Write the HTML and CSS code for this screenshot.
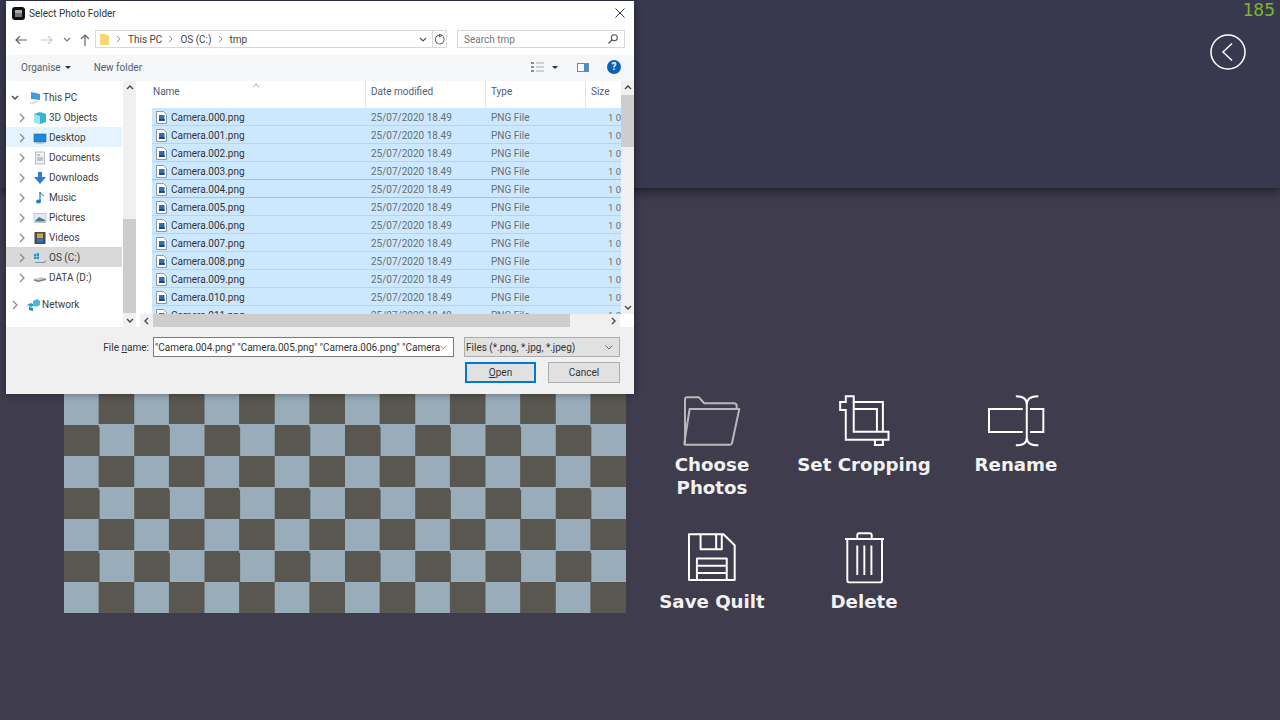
FILE: index.html
```html
<!DOCTYPE html>
<html lang="en">
<head>
  <meta charset="UTF-8" />
  <title>Select Photo Folder</title>
  <link rel="stylesheet" href="styles.css">
</head>
<body>
  <svg class="defs" width="0" height="0">
    <symbol id="file" viewBox="0 0 11 13">
      <path d="M.5.5h7l3 3v9H.5z" fill="#fff" stroke="#8f99a3"/>
      <rect x="3" y="4" width="5.5" height="6" fill="#2f6fae"/>
      <rect x="3" y="8" width="5.5" height="2" fill="#1b4775"/>
    </symbol>
    <symbol id="chev-right" viewBox="0 0 6 10">
      <path d="M1 1l4 4-4 4" fill="none" stroke="#8a8a8a" stroke-width="1.2"/>
    </symbol>
  </svg>

  <header class="topbar">
    <span class="counter">185</span>
    <button class="back-btn" type="button" aria-label="Back">
      <svg viewBox="0 0 36 36" width="36" height="36">
        <circle cx="18" cy="18" r="17" fill="none" stroke="#fff" stroke-width="1.5"/>
        <path d="M22 9.500l-9 8.500 9 8.500" fill="none" stroke="#fff" stroke-width="1.500"/>
      </svg>
    </button>
  </header>

  <main class="editor">
    <div class="checker"></div>

    <div class="actions">
      <div class="action">
        <svg class="action-icon" viewBox="95 40 185 160" width="62" height="53">
          <g fill="none" stroke="#b9b9bb" stroke-width="6" stroke-linejoin="round">
            <path d="M106 190V56q0-6 6-6h36l16 18h90q8 0 8 8v9"/>
            <path d="M120 85h150l-22 103q-1 5-6 5H108q-5 0-4-5z"/>
          </g>
        </svg>
        <span class="action-label">Choose<br>Photos</span>
      </div>
      <div class="action">
        <svg class="action-icon" viewBox="560 40 165 160" width="55" height="53">
          <g fill="none" stroke="#fff" stroke-width="6">
            <path d="M586 47h24v107h105v24H586V88h-17V64h17z"/>
            <path d="M610 64h88v88M610 85h70v67M674 178v16h24v-16"/>
          </g>
        </svg>
        <span class="action-label">Set Cropping</span>
      </div>
      <div class="action">
        <svg class="action-icon" viewBox="1010 40 175 160" width="58" height="53">
          <g fill="none" stroke="#fff" stroke-width="6">
            <path d="M1118 85h-102v70h102M1140 85h40v70h-40"/>
            <path d="M1097 47q33 0 33 24v100q0 24-33 24M1165 47q-35 0-35 24M1165 195q-35 0-35-24"/>
          </g>
        </svg>
        <span class="action-label">Rename</span>
      </div>
      <div class="action">
        <svg class="action-icon" viewBox="110 455 155 160" width="52" height="53">
          <g fill="none" stroke="#fff" stroke-width="6" stroke-linejoin="round">
            <path d="M118 465h104l34 33v105H118z"/>
            <path d="M153 465v45h64v-45M200 465v45"/>
            <path d="M142 603v-65h90v65M142 560h90M142 582h90"/>
          </g>
        </svg>
        <span class="action-label">Save Quilt</span>
      </div>
      <div class="action">
        <svg class="action-icon" viewBox="575 450 135 165" width="45" height="55">
          <g fill="none" stroke="#fff" stroke-width="6" stroke-linejoin="round">
            <path d="M582 475h121M620 475v-12q0-6 6-6h33q6 0 6 6v12"/>
            <path d="M589 475v128q0 7 7 7h94q7 0 7-7V475"/>
            <path d="M620 495v92M642 495v92M664 495v92"/>
          </g>
        </svg>
        <span class="action-label">Delete</span>
      </div>
    </div>
  </main>

  <div class="dialog">
    <div class="titlebar">
      <svg class="app-icon" viewBox="0 0 13 13" width="13" height="13">
        <rect width="13" height="13" rx="3" fill="#111"/>
        <rect x="3" y="3" width="7" height="7" fill="#777"/>
        <rect x="3" y="3" width="7" height="3" fill="#aaa"/>
      </svg>
      <span class="title">Select Photo Folder</span>
      <svg class="close" viewBox="0 0 10 10" width="10" height="10">
        <path d="M.5.5l9 9M9.500.5l-9 9" stroke="#333" stroke-width="1"/>
      </svg>
    </div>

    <div class="addressbar">
      <svg class="nav-btn" viewBox="0 0 12 10" width="12" height="10"><path d="M12 5H1M5 1L1 5l4 4" fill="none" stroke="#666" stroke-width="1.200"/></svg>
      <svg class="nav-btn fwd" viewBox="0 0 12 10" width="12" height="10"><path d="M0 5h11M7 1l4 4-4 4" fill="none" stroke="#ccc" stroke-width="1.200"/></svg>
      <svg class="nav-btn down" viewBox="0 0 8 5" width="8" height="5"><path d="M1 1l3 3 3-3" fill="none" stroke="#777" stroke-width="1.100"/></svg>
      <svg class="nav-btn up" viewBox="0 0 10 12" width="10" height="12"><path d="M5 12V1M1 5l4-4 4 4" fill="none" stroke="#666" stroke-width="1.200"/></svg>
      <div class="pathbox">
        <svg class="crumb-folder" viewBox="0 0 9 11" width="9" height="11"><path d="M0 0h6l3 2v9H0z" fill="#f7d774"/></svg>
        <svg class="crumb-sep" viewBox="0 0 6 10"><use href="#chev-right"/></svg>
        <span>This PC</span>
        <svg class="crumb-sep" viewBox="0 0 6 10"><use href="#chev-right"/></svg>
        <span>OS (C:)</span>
        <svg class="crumb-sep" viewBox="0 0 6 10"><use href="#chev-right"/></svg>
        <span>tmp</span>
        <svg class="path-drop" viewBox="0 0 8 5" width="8" height="5"><path d="M1 1l3 3 3-3" fill="none" stroke="#555" stroke-width="1.100"/></svg>
        <span class="path-refresh">
          <svg viewBox="0 0 12 12" width="11" height="11"><path d="M9.500 2.500A4.800 4.800 0 1 1 6 1.200M6 0v3l3-1.500z" fill="none" stroke="#666" stroke-width="1.100"/></svg>
        </span>
      </div>
      <div class="searchbox">
        <span>Search tmp</span>
        <svg viewBox="0 0 10 10" width="10" height="10"><circle cx="6.300" cy="3.700" r="3" fill="none" stroke="#555" stroke-width="1.100"/><path d="M4 6L.5 9.500" stroke="#555" stroke-width="1.300"/></svg>
      </div>
    </div>

    <div class="toolbar">
      <span class="tool">Organise</span>
      <span class="caret"></span>
      <span class="tool new-folder">New folder</span>
      <svg class="view-icon" viewBox="0 0 13 10" width="13" height="10">
        <path d="M0 0h3v2H0zM0 4h3v2H0zM0 8h3v2H0z" fill="#8e8e8e"/>
        <path d="M5 1h8M5 5h8M5 9h8" stroke="#aaa" stroke-width="1"/>
      </svg>
      <span class="caret view-caret"></span>
      <svg class="pane-icon" viewBox="0 0 12 9" width="12" height="9">
        <rect x=".5" y=".5" width="11" height="8" fill="#fff" stroke="#7a8794"/>
        <rect x="7" y="1" width="4" height="7" fill="#3d8fd6"/>
      </svg>
      <span class="help">?</span>
    </div>

    <div class="browser">
      <nav class="tree">
        <div class="tree-row top"><svg class="chev-down" viewBox="0 0 8 6"><path d="M1 1l3 3 3-3" fill="none" stroke="#444" stroke-width="1.300"/></svg>
          <svg class="tree-icon" viewBox="0 0 14 14"><path d="M4 1l9 2v6l-9-1z" fill="#3f9ddf"/><path d="M1 12l7-2 4 1-6 2z" fill="#d5dbe0"/></svg>This PC</div>
        <div class="tree-row"><svg class="chev" viewBox="0 0 6 10"><use href="#chev-right"/></svg>
          <svg class="tree-icon" viewBox="0 0 14 14"><path d="M1 3l6-2 6 2v8l-6 2-6-2z" fill="#33b5cf"/><path d="M1 3l6 2v8l-6-2z" fill="#9fe3ee"/></svg>3D Objects</div>
        <div class="tree-row hover"><svg class="chev" viewBox="0 0 6 10"><use href="#chev-right"/></svg>
          <svg class="tree-icon" viewBox="0 0 14 14"><rect x="1" y="3" width="12" height="8" fill="#1f88d9" stroke="#1565a8" stroke-width=".6"/><path d="M3 12h8" stroke="#9db4c6"/></svg>Desktop</div>
        <div class="tree-row"><svg class="chev" viewBox="0 0 6 10"><use href="#chev-right"/></svg>
          <svg class="tree-icon" viewBox="0 0 14 14"><rect x="2.500" y="1" width="9" height="12" fill="#eef1f4" stroke="#9aa5ae" stroke-width=".7"/><path d="M4 4h3M4 7h6M4 9h6" stroke="#7d97ad"/></svg>Documents</div>
        <div class="tree-row"><svg class="chev" viewBox="0 0 6 10"><use href="#chev-right"/></svg>
          <svg class="tree-icon" viewBox="0 0 14 14"><path d="M5 1h4v5h4l-6 7-6-7h4z" fill="#2a7fd0"/></svg>Downloads</div>
        <div class="tree-row"><svg class="chev" viewBox="0 0 6 10"><use href="#chev-right"/></svg>
          <svg class="tree-icon" viewBox="0 0 14 14"><path d="M7 1v9" stroke="#1f7fd0" stroke-width="1.300"/><ellipse cx="5.500" cy="10.500" rx="2.500" ry="2" fill="#1f7fd0"/><path d="M7 1q1 3 4 4" fill="none" stroke="#1f7fd0"/></svg>Music</div>
        <div class="tree-row"><svg class="chev" viewBox="0 0 6 10"><use href="#chev-right"/></svg>
          <svg class="tree-icon" viewBox="0 0 14 14"><rect x="1" y="2.500" width="12" height="9" fill="#e4eaef" stroke="#a8b1b8" stroke-width=".6"/><path d="M2 10l4-4 6 3v1.500H2z" fill="#3f7f9f"/></svg>Pictures</div>
        <div class="tree-row"><svg class="chev" viewBox="0 0 6 10"><use href="#chev-right"/></svg>
          <svg class="tree-icon" viewBox="0 0 14 14"><rect x="1.500" y="1" width="11" height="12" fill="#444c55"/><rect x="4" y="2.500" width="6" height="4.500" fill="#d9a53a"/><rect x="4" y="7.500" width="6" height="4" fill="#2f74c0"/></svg>Videos</div>
        <div class="tree-row active"><svg class="chev" viewBox="0 0 6 10"><use href="#chev-right"/></svg>
          <svg class="tree-icon" viewBox="0 0 14 14"><path d="M1 3l2.500-.5v2.500H1zM4 2.300l2-.3v3H4zM1 5.500h2.500V8H1zM4 5.500h2V8H4z" fill="#1a9ad6"/><path d="M2 11h9l2-2v1.500l-2 1.500H2z" fill="#8b9299"/></svg>OS (C:)</div>
        <div class="tree-row"><svg class="chev" viewBox="0 0 6 10"><use href="#chev-right"/></svg>
          <svg class="tree-icon" viewBox="0 0 14 14"><path d="M1 8l8-2 4 1.500v1.500l-8 2-4-1.500z" fill="#c6cacd"/><path d="M1 8l4 1.500 8-2v1.500l-8 2-4-1.500z" fill="#777f86"/></svg>DATA (D:)</div>
        <div class="tree-row top network"><svg class="chev" viewBox="0 0 6 10"><use href="#chev-right"/></svg>
          <svg class="tree-icon" viewBox="0 0 14 14"><path d="M1 7l4-2 4 2-4 2z" fill="#2aa0cf"/><path d="M7 3l4-2 3 2v4l-4 2-3-2z" fill="#49b6dd"/><path d="M3 9l4 1v3l-4-1z" fill="#2387b5"/></svg>Network</div>
      </nav>

      <div class="scrollbar-v tree-scroll">
        <span class="sb-arrow"><svg viewBox="0 0 8 5" width="8" height="5"><path d="M1 4l3-3 3 3" fill="none" stroke="#444" stroke-width="1.300"/></svg></span>
        <div class="sb-track"><div class="sb-thumb"></div></div>
        <span class="sb-arrow"><svg viewBox="0 0 8 5" width="8" height="5"><path d="M1 1l3 3 3-3" fill="none" stroke="#444" stroke-width="1.300"/></svg></span>
      </div>

      <section class="files">
        <div class="files-top">
          <div class="files-main">
            <div class="columns">
              <span class="sort-mark"></span>
              <span class="col col-name">Name</span>
              <span class="col col-date">Date modified</span>
              <span class="col col-type">Type</span>
              <span class="col col-size">Size</span>
            </div>
            <div class="rows">
              <div class="file-row"><svg class="file-icon"><use href="#file"/></svg><span class="fname">Camera.000.png</span><span>25/07/2020 18.49</span><span>PNG File</span><span class="fsize">1 0</span></div>
              <div class="file-row"><svg class="file-icon"><use href="#file"/></svg><span class="fname">Camera.001.png</span><span>25/07/2020 18.49</span><span>PNG File</span><span class="fsize">1 0</span></div>
              <div class="file-row"><svg class="file-icon"><use href="#file"/></svg><span class="fname">Camera.002.png</span><span>25/07/2020 18.49</span><span>PNG File</span><span class="fsize">1 0</span></div>
              <div class="file-row focus-prev"><svg class="file-icon"><use href="#file"/></svg><span class="fname">Camera.003.png</span><span>25/07/2020 18.49</span><span>PNG File</span><span class="fsize">1 0</span></div>
              <div class="file-row focus"><svg class="file-icon"><use href="#file"/></svg><span class="fname">Camera.004.png</span><span>25/07/2020 18.49</span><span>PNG File</span><span class="fsize">1 0</span></div>
              <div class="file-row"><svg class="file-icon"><use href="#file"/></svg><span class="fname">Camera.005.png</span><span>25/07/2020 18.49</span><span>PNG File</span><span class="fsize">1 0</span></div>
              <div class="file-row"><svg class="file-icon"><use href="#file"/></svg><span class="fname">Camera.006.png</span><span>25/07/2020 18.49</span><span>PNG File</span><span class="fsize">1 0</span></div>
              <div class="file-row"><svg class="file-icon"><use href="#file"/></svg><span class="fname">Camera.007.png</span><span>25/07/2020 18.49</span><span>PNG File</span><span class="fsize">1 0</span></div>
              <div class="file-row"><svg class="file-icon"><use href="#file"/></svg><span class="fname">Camera.008.png</span><span>25/07/2020 18.49</span><span>PNG File</span><span class="fsize">1 0</span></div>
              <div class="file-row"><svg class="file-icon"><use href="#file"/></svg><span class="fname">Camera.009.png</span><span>25/07/2020 18.49</span><span>PNG File</span><span class="fsize">1 0</span></div>
              <div class="file-row"><svg class="file-icon"><use href="#file"/></svg><span class="fname">Camera.010.png</span><span>25/07/2020 18.49</span><span>PNG File</span><span class="fsize">1 0</span></div>
              <div class="file-row"><svg class="file-icon"><use href="#file"/></svg><span class="fname">Camera.011.png</span><span>25/07/2020 18.49</span><span>PNG File</span><span class="fsize">1 0</span></div>
            </div>
          </div>
          <div class="scrollbar-v list-scroll">
            <span class="sb-arrow"><svg viewBox="0 0 8 5" width="8" height="5"><path d="M1 4l3-3 3 3" fill="none" stroke="#444" stroke-width="1.300"/></svg></span>
            <div class="sb-track"><div class="sb-thumb"></div></div>
            <span class="sb-arrow"><svg viewBox="0 0 8 5" width="8" height="5"><path d="M1 1l3 3 3-3" fill="none" stroke="#444" stroke-width="1.300"/></svg></span>
          </div>
        </div>
        <div class="scrollbar-h">
          <span class="sb-arrow"><svg viewBox="0 0 5 8" width="5" height="8"><path d="M4 1L1 4l3 3" fill="none" stroke="#444" stroke-width="1.300"/></svg></span>
          <div class="sb-track-h"><div class="sb-thumb-h"></div></div>
          <span class="sb-arrow"><svg viewBox="0 0 5 8" width="5" height="8"><path d="M1 1l3 3-3 3" fill="none" stroke="#444" stroke-width="1.300"/></svg></span>
          <span class="sb-corner"></span>
        </div>
      </section>
    </div>

    <footer class="dialog-foot">
      <div class="foot-row">
        <label class="fname-label">File <u>n</u>ame:</label>
        <div class="fname-input">
          <span class="fname-value">"Camera.004.png" "Camera.005.png" "Camera.006.png" "Camera</span>
          <svg viewBox="0 0 8 5" width="8" height="5"><path d="M.5.5L4 4 7.500.5" fill="none" stroke="#666"/></svg>
        </div>
        <div class="filter">
          <span>Files (*.png, *.jpg, *.jpeg)</span>
          <svg viewBox="0 0 8 5" width="8" height="5"><path d="M.5.5L4 4 7.500.5" fill="none" stroke="#666"/></svg>
        </div>
      </div>
      <div class="foot-row buttons">
        <button class="win-btn primary" type="button"><u>O</u>pen</button>
        <button class="win-btn" type="button">Cancel</button>
      </div>
    </footer>
  </div>
</body>
</html>
```

FILE: styles.css
```css
* {
  box-sizing: border-box;
}
html, body {
  margin: 0;
  height: 100%;
}
body {
  width: 1280px;
  height: 720px;
  overflow: hidden;
  background: #3e3c4d;
  font-family: Roboto, sans-serif;
  position: relative;
}
.defs {
  position: absolute;
}

/* app behind the dialog */
.topbar {
  height: 188px;
  background: #38384e;
  box-shadow: 0 3px 10px rgba(0, 0, 0, 0.55);
  position: relative;
  display: flex;
  flex-direction: column;
  align-items: flex-end;
}
.counter {
  font-family: "DejaVu Sans Mono", monospace;
  font-size: 18px;
  line-height: 20px;
  color: #7fb52a;
  margin-right: 5px;
}
.back-btn {
  background: none;
  border: 0;
  padding: 0;
  margin: 14px 34px 0 0;
  width: 36px;
  height: 36px;
}
.back-btn svg {
  display: block;
}
.editor {
  display: flex;
  padding: 205px 0 0 64px;
  gap: 10px;
}
.checker {
  width: 562px;
  height: 220px;
  background: repeating-conic-gradient(#5a5650 0 25%, #98acb9 0 50%) 0 0 / 70.25px 63px;
  filter: blur(0.7px);
}
.actions {
  display: grid;
  grid-template-columns: repeat(3, 152px);
  grid-auto-rows: 137px;
  margin-top: 1px;
}
.action {
  display: flex;
  flex-direction: column;
  align-items: center;
}
.action-icon {
  display: block;
  height: 53px;
  margin-bottom: 6px;
}
.action-label {
  font-family: "DejaVu Sans", sans-serif;
  font-weight: 700;
  font-size: 18.2px;
  line-height: 23px;
  color: #f2f2f2;
  text-align: center;
  white-space: nowrap;
}

/* file dialog */
.dialog {
  position: absolute;
  left: 6px;
  top: 1px;
  width: 628px;
  height: 393px;
  background: #fff;
  display: flex;
  flex-direction: column;
  font-size: 10px;
  color: #3a3a3a;
  box-shadow: 0 0 8px rgba(0, 0, 0, 0.4);
}
.titlebar {
  height: 27px;
  flex: none;
  display: flex;
  align-items: center;
  padding: 0 9px 3px 6px;
}
.app-icon {
  margin-right: 4px;
}
.title {
  flex: 1;
  color: #333;
}
.addressbar {
  height: 27px;
  flex: none;
  display: flex;
  align-items: flex-start;
  padding-top: 2px;
}
.nav-btn {
  margin-top: 5px;
  margin-left: 9px;
}
.nav-btn.fwd {
  margin-left: 14px;
}
.nav-btn.down {
  margin: 7px 0 0 10px;
}
.nav-btn.up {
  margin: 4px 0 0 9px;
}
.pathbox {
  width: 352px;
  height: 18px;
  margin-left: 5px;
  border: 1px solid #d9d9d9;
  display: flex;
  align-items: center;
  padding-left: 4px;
  color: #444;
}
.crumb-folder {
  margin-right: 7px;
}
.crumb-sep {
  width: 5px;
  height: 8px;
  margin-right: 7px;
}
.crumb-sep + span {
  margin-right: 6px;
}
.path-drop {
  margin-left: auto;
  margin-right: 5px;
}
.path-refresh {
  width: 14px;
  height: 100%;
  border-left: 1px solid #d9d9d9;
  display: flex;
  align-items: center;
  justify-content: center;
}
.searchbox {
  width: 168px;
  height: 18px;
  margin-left: 10px;
  border: 1px solid #d9d9d9;
  display: flex;
  align-items: center;
  justify-content: space-between;
  padding: 0 6px;
  color: #777;
}
.toolbar {
  height: 26px;
  flex: none;
  background: #f5f6f7;
  display: flex;
  align-items: center;
  padding: 0 0 2px 15px;
  color: #51606e;
}
.caret {
  width: 0;
  height: 0;
  margin-left: 4px;
  border-left: 3px solid transparent;
  border-right: 3px solid transparent;
  border-top: 3px solid #333;
}
.new-folder {
  margin-left: 23px;
}
.view-icon {
  margin-left: auto;
}
.view-caret {
  margin-left: 8px;
}
.pane-icon {
  margin-left: 19px;
}
.help {
  width: 14px;
  height: 14px;
  border-radius: 50%;
  margin: 0 13px 0 18px;
  background: #0a62b5;
  color: #fff;
  font-weight: 700;
  font-size: 10px;
  line-height: 14px;
  text-align: center;
}
.browser {
  height: 246px;
  flex: none;
  display: flex;
}
.tree {
  width: 116px;
  flex: none;
  padding-top: 6px;
  margin-right: 1px;
}
.tree-row {
  height: 20px;
  display: flex;
  align-items: center;
  padding: 1px 0 0 13px;
  color: #3d3d3d;
}
.tree-row.top {
  padding-left: 6px;
}
.tree-row.hover {
  background: #e5f3ff;
}
.tree-row.active {
  background: #d9d9d9;
}
.tree-row.network {
  margin-top: 7px;
}
.chev {
  width: 6px;
  height: 10px;
  margin-right: 8px;
  flex: none;
}
.chev-down {
  width: 8px;
  height: 6px;
  margin: 0 8px 0 -1px;
  flex: none;
}
.tree-icon {
  width: 14px;
  height: 14px;
  margin-right: 2px;
  flex: none;
}
.scrollbar-v {
  width: 13px;
  flex: none;
  background: #f0f0f0;
  display: flex;
  flex-direction: column;
}
.sb-arrow {
  height: 13px;
  flex: none;
  display: flex;
  align-items: center;
  justify-content: center;
}
.sb-track {
  flex: 1;
  position: relative;
}
.sb-thumb {
  background: #cdcdcd;
  position: absolute;
  left: 0;
  right: 0;
}
.tree-scroll .sb-thumb {
  top: 125px;
  height: 94px;
}
.list-scroll .sb-thumb {
  top: 1px;
  height: 52px;
}
.files {
  flex: 1;
  display: flex;
  flex-direction: column;
  min-width: 0;
}
.files-top {
  height: 233px;
  display: flex;
}
.files-main {
  flex: 1;
  min-width: 0;
  overflow: hidden;
}
.columns {
  height: 27px;
  position: relative;
  color: #51606e;
  display: grid;
  grid-template-columns: 230px 120px 100px 35px;
  align-items: center;
}
.col {
  height: 100%;
  display: flex;
  align-items: center;
  border-right: 1px solid #e5e5e5;
  padding: 0 0 6px 5px;
}
.col-name {
  padding-left: 17px;
}
.col-size {
  border: 0;
}
.sort-mark {
  position: absolute;
  left: 117px;
  top: 1px;
  width: 6px;
  height: 6px;
  border-left: 1px solid #aaa;
  border-top: 1px solid #aaa;
  transform: rotate(45deg) scale(0.8);
  margin-top: 2px;
}
.rows {
  height: 206px;
  overflow: hidden;
  margin-left: 16px;
}
.file-row {
  height: 18px;
  padding-top: 1px;
  background: #cce8ff;
  border-bottom: 1px solid #a9d8fb;
  display: grid;
  grid-template-columns: 219px 120px 117px auto;
  align-items: center;
  color: #6d6d6d;
  white-space: nowrap;
}
.file-row.focus-prev,
.file-row.focus {
  border-bottom-color: #8ec8f4;
}
.file-icon {
  position: absolute;
  width: 11px;
  height: 13px;
  margin-left: 4px;
}
.fname {
  padding-left: 19px;
  color: #333;
}
.fsize {
  font-size: 9.5px;
}
.scrollbar-h {
  height: 13px;
  margin-left: 4px;
  display: flex;
  background: #f0f0f0;
}
.scrollbar-h .sb-arrow {
  width: 13px;
}
.sb-track-h {
  flex: 1;
  position: relative;
}
.sb-thumb-h {
  position: absolute;
  left: 0;
  top: 0;
  bottom: 0;
  width: 417px;
  background: #cdcdcd;
}
.sb-corner {
  width: 14px;
  background: #fff;
}
.dialog-foot {
  flex: 1;
  background: #f0f0f0;
  padding-top: 10px;
}
.foot-row {
  display: flex;
  align-items: center;
}
.fname-label {
  width: 143px;
  text-align: right;
  color: #333;
}
.fname-input {
  width: 301px;
  height: 20px;
  margin-left: 4px;
  background: #fff;
  border: 1px solid #7a7a7a;
  display: flex;
  align-items: center;
  padding: 0 6px 0 1px;
  color: #333;
}
.fname-value {
  flex: 1;
  white-space: nowrap;
}
.filter {
  width: 156px;
  height: 20px;
  margin-left: 10px;
  background: #e1e1e1;
  border: 1px solid #adadad;
  display: flex;
  align-items: center;
  justify-content: space-between;
  padding: 0 6px 0 1px;
  color: #333;
}
.buttons {
  margin-top: 5px;
  padding-left: 459px;
}
.win-btn {
  width: 72px;
  height: 21px;
  padding: 0;
  background: #e1e1e1;
  border: 1px solid #adadad;
  font: inherit;
  color: #333;
}
.win-btn.primary {
  width: 71px;
  border: 2px solid #0078d7;
  margin-right: 12px;
}
```
